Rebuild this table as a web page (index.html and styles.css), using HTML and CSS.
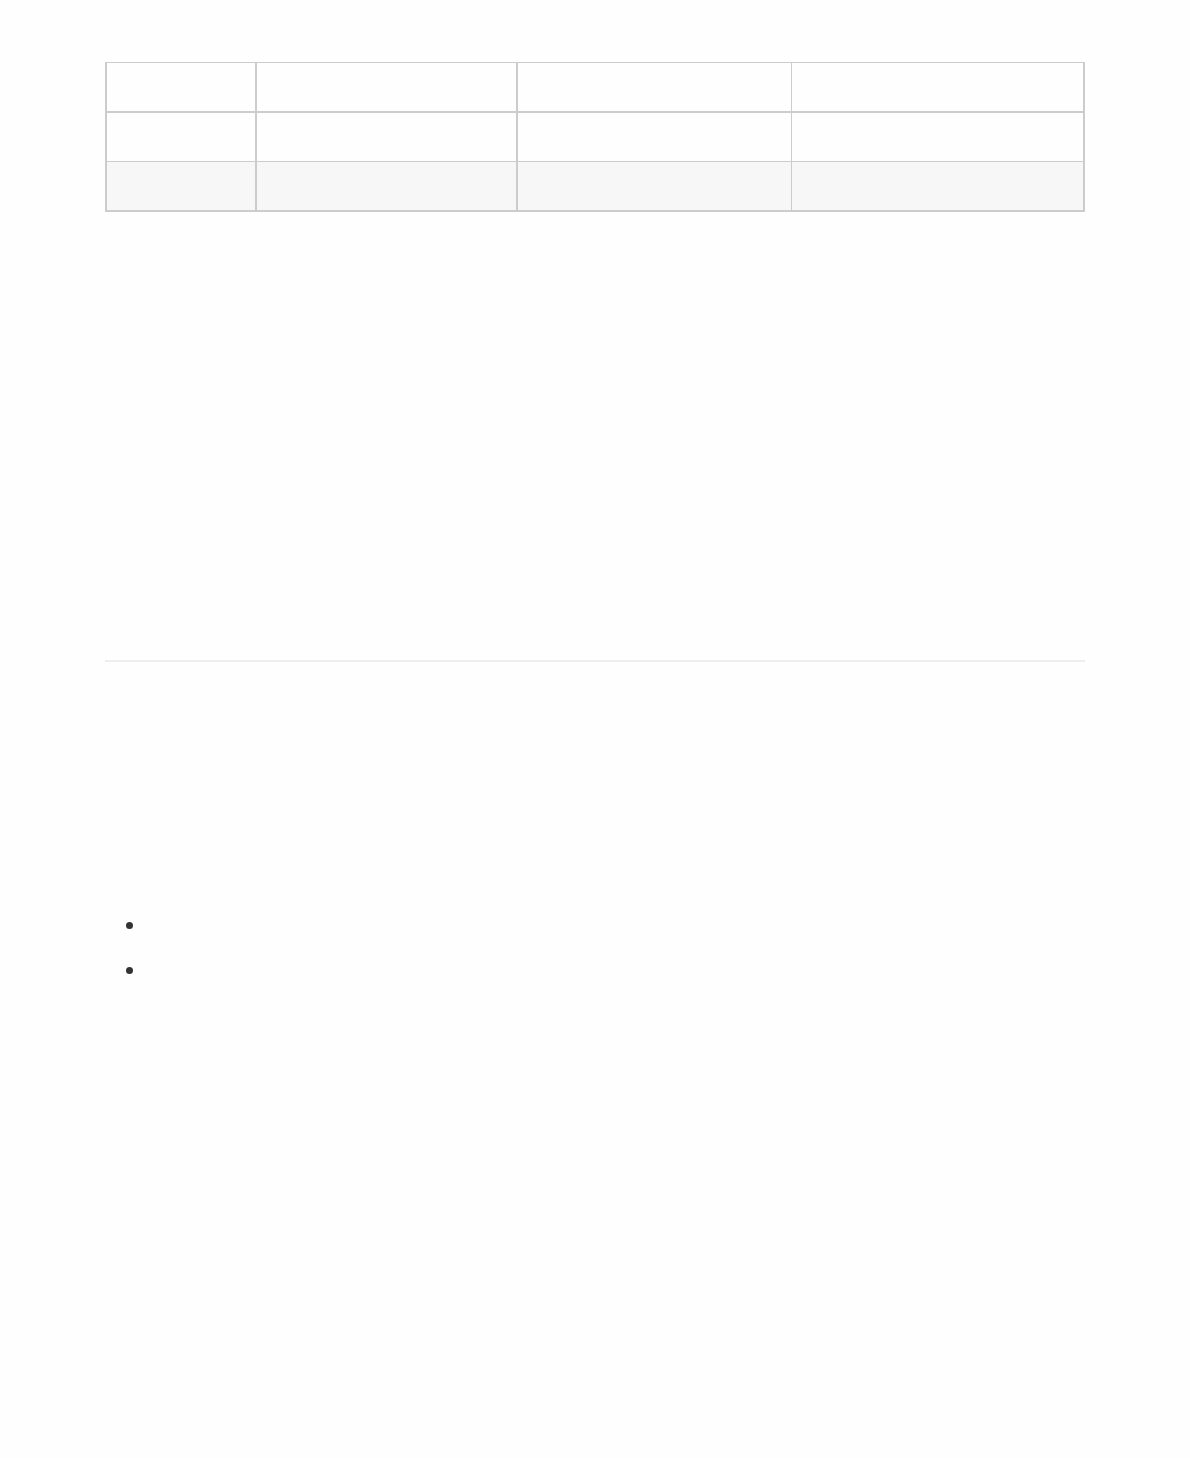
FILE: index.html
```html
<!DOCTYPE html>
<html lang="en">
<head>
  <meta charset="UTF-8" />
  <meta name="viewport" content="width=device-width, initial-scale=1" />
  <title>Notes</title>
  <link rel="stylesheet" href="styles.css">
</head>
<body>
  <main class="page">

    <table class="grid">
      <thead>
        <tr>
          <th></th>
          <th></th>
          <th></th>
          <th></th>
        </tr>
      </thead>
      <tbody>
        <tr>
          <td></td>
          <td></td>
          <td></td>
          <td></td>
        </tr>
        <tr class="striped">
          <td></td>
          <td></td>
          <td></td>
          <td></td>
        </tr>
      </tbody>
    </table>

    <hr class="rule" />

    <ul class="list">
      <li></li>
      <li></li>
    </ul>

  </main>
</body>
</html>
```

FILE: styles.css
```css
    body {
      margin: 0;
      background: #fefefe;
      color: #333;
      font-family: 'Liberation Sans', Arial, sans-serif;
      font-size: 16px;
    }

    .page {
      width: 980px;
      margin: 0 auto;
      padding-top: 62px;
    }

    /* Table with mixed border weights */
    .grid {
      width: 980px;
      table-layout: fixed;
      border-collapse: separate;
      border-spacing: 0;
    }

    .grid th,
    .grid td {
      box-sizing: border-box;
      height: 48px;
      padding: 0;
      border: 0 solid #cccccc;
      border-right-width: 2px;
    }

    .grid th {
      border-top-width: 1px;
      border-bottom-width: 2px;
      height: 51px;
    }

    .grid td {
      border-bottom-width: 1px;
      height: 49px;
    }

    .grid tr.striped td {
      border-bottom-width: 2px;
      height: 50px;
      background: #f7f7f7;
    }

    .grid th:nth-child(1),
    .grid td:nth-child(1) {
      width: 152px;
      border-left-width: 2px;
    }
    .grid th:nth-child(2),
    .grid td:nth-child(2) {
      width: 261px;
    }
    .grid th:nth-child(3),
    .grid td:nth-child(3) {
      width: 274px;
      border-right-width: 1px;
    }
    .grid th:nth-child(4),
    .grid td:nth-child(4) {
      width: 293px;
    }

    .rule {
      height: 2px;
      margin: 448px 0 0;
      border: none;
      background: #eeeeee;
    }

    .list {
      margin: 241px 0 0;
      padding: 0 0 0 21px;
      list-style: none;
    }

    .list li {
      display: flex;
      align-items: center;
      height: 45px;
    }

    .list li::before {
      content: "";
      width: 7px;
      height: 7px;
      border-radius: 50%;
      background: #333;
    }
```
